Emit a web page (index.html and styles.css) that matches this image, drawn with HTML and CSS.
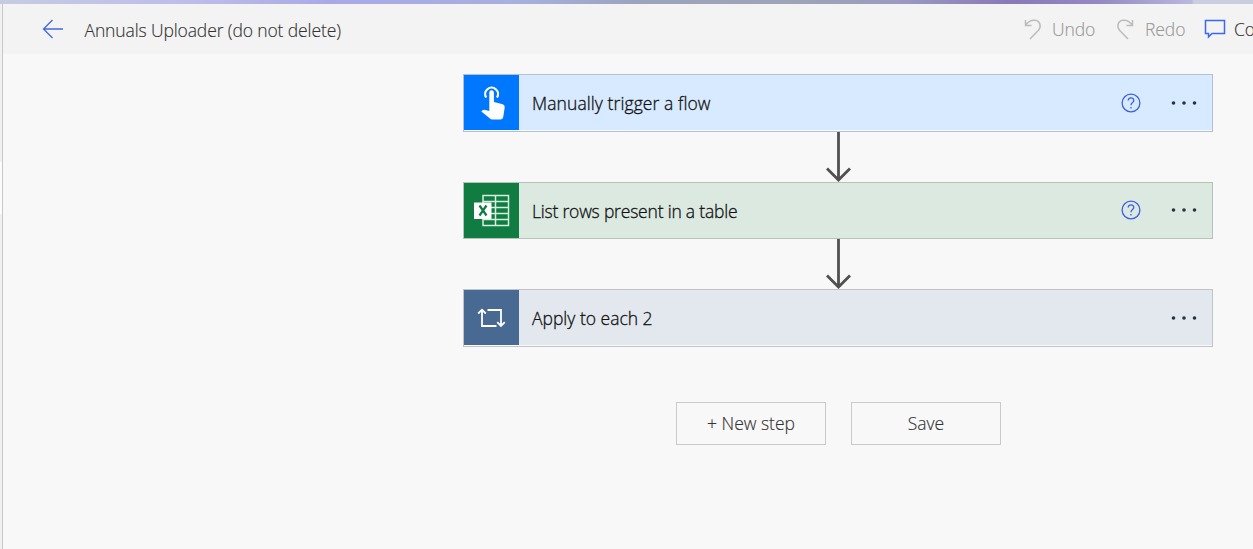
FILE: index.html
```html
<!DOCTYPE html>
<html lang="en">
<head>
<meta charset="utf-8">
<title>Annuals Uploader</title>
<link rel="stylesheet" href="styles.css">
</head>
<body>
<div class="banner"></div>
<div class="app">
  <div class="rail"><div class="rail-item"></div></div>
  <div class="workspace">
    <header class="toolbar">
      <svg class="back" width="22" height="20" viewBox="0 0 22 20"><path d="M10.500 1 1.500 10l9 9M1.500 10H21"/></svg>
      <h1 class="title">Annuals Uploader (do not delete)</h1>
      <div class="actions">
        <svg class="history undo-icon" width="18" height="21" viewBox="0 0 18 21"><path d="M1.500 1v5.500h6M1.500 6.500C4 2.500 7.500 1 11 1.300c5 .5 6.700 6.300 3.500 10L6 20"/></svg>
        <span class="action undo">Undo</span>
        <svg class="history redo-icon" width="18" height="21" viewBox="0 0 18 21"><path d="M16.500 1v5.500h-6M16.500 6.500C14 2.500 10.500 1 7 1.300c-5 .5-6.700 6.300-3.500 10L12 20"/></svg>
        <span class="action redo">Redo</span>
        <svg class="comment-icon" width="22" height="20" viewBox="0 0 22 20"><path d="M1.500 1.500h19v13H8l-3.500 3.500v-3.500h-3z"/></svg>
        <span class="action comments">Co</span>
      </div>
    </header>
    <main class="flow">
      <div class="card trigger">
        <div class="tile"><svg width="56" height="56" viewBox="0 0 56 56"><path class="ring" d="M22.200 22.500a6.400 6.400 0 1 1 10.800 0"/><path class="hand" d="M25.300 33V17.500a2.300 2.300 0 0 1 4.600 0V27l8.900 2.200q2.200.7 1.900 3.200L39.400 41q-.4 3.500-3.300 3.500h-7.500q-2 0-3.200-1.500L17.300 36.500q1.300-2.200 4-1.600l4 1.100z"/></svg></div>
        <span class="label manual">Manually trigger a flow</span>
        <svg class="help" width="20" height="20" viewBox="0 0 20 20"><circle cx="10" cy="10" r="8.900"/><path d="M7.200 7.600c0-3.700 5.600-3.700 5.600-.2C12.800 9.500 10 9.500 10 12.200M10 14v1.500"/></svg>
        <svg class="more" width="26" height="6" viewBox="0 0 26 6"><circle cx="2.500" cy="3" r="1.800"/><circle cx="13" cy="3" r="1.800"/><circle cx="23.500" cy="3" r="1.800"/></svg>
      </div>
      <svg class="arrow" width="28" height="50" viewBox="0 0 28 50"><path d="M14.500 0v48M3 36.500 14.500 48 26 36.500"/></svg>
      <div class="card excel">
        <div class="tile"><svg width="56" height="56" viewBox="0 0 56 56"><path class="sheet" d="M19 12.500h25.500v30H19zM31.500 12.500v30M19 18.500h25.500M19 24.500h25.500M19 30.500h25.500M19 36.500h25.500"/><path class="book" d="M10 19.500h17.500V36H10z"/><path class="mark" d="m15.500 22.500 7 10M22.500 22.500l-7 10"/></svg></div>
        <span class="label rows">List rows present in a table</span>
        <svg class="help" width="20" height="20" viewBox="0 0 20 20"><circle cx="10" cy="10" r="8.900"/><path d="M7.200 7.600c0-3.700 5.600-3.700 5.600-.2C12.800 9.500 10 9.500 10 12.200M10 14v1.500"/></svg>
        <svg class="more" width="26" height="6" viewBox="0 0 26 6"><circle cx="2.500" cy="3" r="1.800"/><circle cx="13" cy="3" r="1.800"/><circle cx="23.500" cy="3" r="1.800"/></svg>
      </div>
      <svg class="arrow" width="28" height="50" viewBox="0 0 28 50"><path d="M14.500 0v48M3 36.500 14.500 48 26 36.500"/></svg>
      <div class="card loop">
        <div class="tile"><svg width="56" height="56" viewBox="0 0 56 56"><path class="cycle" d="M32.500 36H18V19.800M14.200 23.500 18 19.700l3.800 3.800M23.500 20H37v15.800M33.200 32.100 37 35.900l3.800-3.800"/></svg></div>
        <span class="label">Apply to each 2</span>
        <svg class="more" width="26" height="6" viewBox="0 0 26 6"><circle cx="2.500" cy="3" r="1.800"/><circle cx="13" cy="3" r="1.800"/><circle cx="23.500" cy="3" r="1.800"/></svg>
      </div>
      <div class="buttons">
        <button class="new-step">+ New step</button>
        <button class="save">Save</button>
      </div>
    </main>
  </div>
</div>
</body>
</html>
```
FILE: styles.css
```css
* { box-sizing: border-box; }
body {
  margin: 0;
  height: 549px;
  overflow: hidden;
  background: #f8f8f8;
  color: #333;
  font: 17.5px/24px "Open Sans", "Noto Sans", sans-serif;
  -webkit-text-stroke: .15px currentColor;
}
svg { display: block; flex: none; fill: none; }
.banner {
  height: 4px;
  background: linear-gradient(90deg, #c5cce2 0, #bdbdea 190px, #a9a9e8 330px, #a7b0dd 520px, #9ba3bd 640px, #9ea4b8 800px, #9a9ac0 900px, #8a79b8 1010px, #9489c4 1100px, #b9b9dc 1192px, #c9cfe0 1194px, #c8cede 100%);
}
.app { display: flex; height: 545px; }
.rail { width: 3px; padding-top: 158px; background: #f1f1f1; border-right: 1px solid #c8c8c8; }
.rail-item { height: 52px; background: #fcfcfc; }
.workspace { flex: 1; min-width: 0; }
.toolbar {
  display: flex;
  height: 50px;
  padding-left: 40px;
  align-items: center;
  overflow: hidden;
  background: #f3f3f3;
}
.back { margin-left: -1px; stroke: #4169df; stroke-width: 1.300; }
.title { margin: 1px 0 0 20.500px; font-size: 17.5px; font-weight: 300; white-space: nowrap; letter-spacing: -.12px; }
.actions { display: flex; align-items: center; margin-left: auto; width: 229px; flex: none; }
.history { stroke: #bcbcbc; stroke-width: 1.500; }
.action { flex: none; font-weight: 300; white-space: nowrap; }
.undo, .redo { color: #999; letter-spacing: -.1px; }
.undo { width: 64px; margin-left: 10px; }
.redo { width: 59px; margin-left: 11px; }
.comment-icon { stroke: #3b67ee; stroke-width: 1.500; }
.comments { margin-left: 8px; }
.flow { display: flex; flex-direction: column; width: 750px; margin: 20px 0 0 460px; }
.card {
  display: flex;
  align-items: center;
  height: 58px;
  border: 1px solid #bbc0c6;
  box-shadow: inset 0 -1px #fbfbfb;
  color: #111;
}
.tile { width: 55px; height: 55px; margin-bottom: 1px; overflow: hidden; flex: none; }
.trigger { background: #d8eaff; border-color: #b3c0d1; }
.trigger .tile { background: #0077ff; }
.excel { height: 57px; background: #dbe9e1; border-color: #b7c2bb; box-shadow: none; }
.excel .tile { background: #107c41; margin: 0; }
.loop { background: #e3e8ef; border-color: #c1c3c6; }
.loop .tile { background: #486991; }
.label { flex: 1; margin: 0 0 0 13px; font-weight: 300; white-space: nowrap; -webkit-text-stroke: .3px currentColor; }
.manual { letter-spacing: .09px; }
.rows { letter-spacing: -.2px; }
.help { margin: 0 30px 1px 0; stroke: #3d5fe0; stroke-width: 1.300; }
.excel .help, .excel .more { margin-bottom: 2px; }
.more { margin-right: 15px; fill: #263240; }
.ring { stroke: #fff; stroke-width: 2.200; }
.hand, .book { fill: #fff; }
.sheet { stroke: #d6eee0; stroke-width: 1.500; }
.mark { stroke: #107c41; stroke-width: 2.200; }
.cycle { stroke: #fff; stroke-width: 1.800; }
.arrow { align-self: center; stroke: #505050; stroke-width: 2.800; }
.buttons { display: flex; gap: 25px; margin: 55px 0 0 213px; }
button {
  width: 150px;
  height: 43px;
  padding: 0 0 2px;
  border: 1px solid #cacaca;
  background: #f8f8f8;
  color: #333;
  font: inherit;
  font-weight: 300;
  -webkit-text-stroke: inherit;
}
```
